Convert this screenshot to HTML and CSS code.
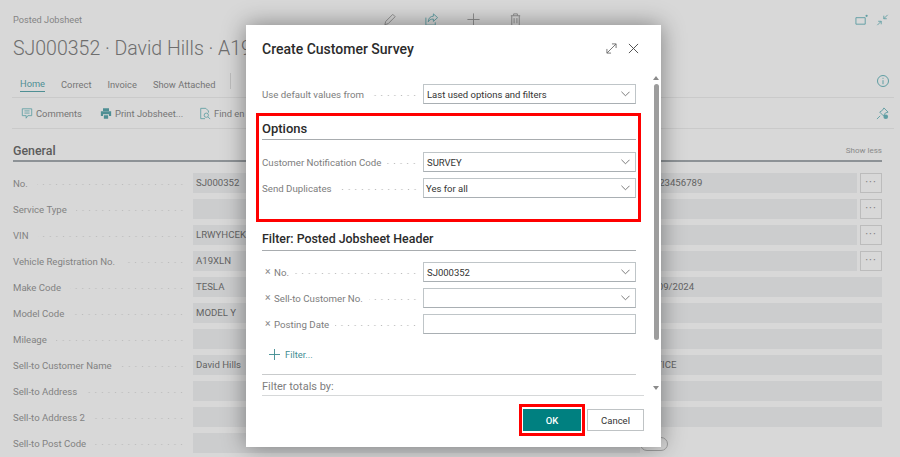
FILE: index.html
```html
<!DOCTYPE html>
<html lang="en">
<head>
	<meta charset="UTF-8">
	<title>Create Customer Survey</title>
	<link rel="stylesheet" href="styles.css">
</head>
<body>
	<div class="page">
		<div class="top">
			<span class="caption">Posted Jobsheet</span>
			<div class="top-tools">
				<svg class="tool" viewBox="0 0 16 16"><path d="M3 13.500l1-3.500 7.500-7.500 2.500 2.500L6.500 12.500z"/></svg>
				<svg class="tool tool-teal" viewBox="0 0 16 16"><path d="M10 2l4.500 4-4.500 4V7.500C7 7.500 5.500 8.500 4.500 10.500 4.500 6.500 7 4.500 10 4.500zM2 6v8h10v-3"/></svg>
				<svg class="tool" viewBox="0 0 16 16"><path d="M8 1.500v13M1.500 8h13"/></svg>
				<svg class="tool" viewBox="0 0 16 16"><path d="M3 4h10M6 4V2h4v2M4 4v10.500h8V4M6.500 6.500v5.500M9.500 6.500v5.500"/></svg>
			</div>
			<div class="top-right">
				<svg class="tool-small" viewBox="0 0 14 12"><path d="M1 3.500h10v7H1z"/><circle class="dot" cx="12.500" cy="1.500" r="1.200"/></svg>
				<svg class="tool-small" viewBox="0 0 14 14"><path d="M13 1L8.500 5.500M8.500 2v3.500H12M1 13l4.500-4.500M5.500 12V8.500H2"/></svg>
			</div>
		</div>
		<h1 class="title">SJ000352 · David Hills · A19</h1>

		<div class="tabs">
			<span class="tab tab-on">Home</span>
			<span class="tab">Correct</span>
			<span class="tab">Invoice</span>
			<span class="tab">Show Attached</span>
			<span class="tab-sep"></span>
			<svg class="tab-info" viewBox="0 0 14 14"><circle cx="7" cy="7" r="5.500"/><path d="M7 6.200v4M7 3.800v1"/></svg>
		</div>

		<div class="actions">
			<span class="action action-a">
				<svg class="action-icon" viewBox="0 0 14 14"><path d="M1.500 1.500h11v8H8L6 12.500V9.500H1.500zM4 4h6M4 6.500h6"/></svg>
				Comments
			</span>
			<span class="action action-b">
				<svg class="action-icon" viewBox="0 0 14 14"><path class="solid" d="M3.500 1h7v3h-7zM1 4.500h12V10h-2.500V8h-7v2H1zM4.500 9h5v4h-5z"/></svg>
				Print Jobsheet...
			</span>
			<span class="action">
				<svg class="action-icon" viewBox="0 0 14 14"><path d="M2 1h6l3 3v2M2 1v12h5"/><circle cx="8.500" cy="9" r="2.500"/><path d="M10.500 11l2.500 2.500"/></svg>
				Find en
			</span>
			<svg class="action-pin" viewBox="0 0 14 14"><path d="M8.500 1l4.500 4.500-3 1-2 3-4-4 3-2zM4.500 9.500L1 13"/><circle class="dot" cx="10.500" cy="10.500" r="2.500"/></svg>
		</div>

		<div class="section-head">
			<span class="section-title">General</span>
			<span class="show-less">Show less</span>
		</div>

		<div class="general">
			<div class="col col-left">
				<div class="g-row"><span class="g-label">No.</span><span class="leader"></span><span class="g-value">SJ000352</span></div>
				<div class="g-row"><span class="g-label">Service Type</span><span class="leader"></span><span class="g-value"></span></div>
				<div class="g-row"><span class="g-label">VIN</span><span class="leader"></span><span class="g-value">LRWYHCEK6</span></div>
				<div class="g-row"><span class="g-label">Vehicle Registration No.</span><span class="leader"></span><span class="g-value">A19XLN</span></div>
				<div class="g-row"><span class="g-label">Make Code</span><span class="leader"></span><span class="g-value">TESLA</span></div>
				<div class="g-row"><span class="g-label">Model Code</span><span class="leader"></span><span class="g-value">MODEL Y</span></div>
				<div class="g-row"><span class="g-label">Mileage</span><span class="leader"></span><span class="g-value"></span></div>
				<div class="g-row"><span class="g-label">Sell-to Customer Name</span><span class="leader"></span><span class="g-value">David Hills</span></div>
				<div class="g-row"><span class="g-label">Sell-to Address</span><span class="leader"></span><span class="g-value"></span></div>
				<div class="g-row"><span class="g-label">Sell-to Address 2</span><span class="leader"></span><span class="g-value"></span></div>
				<div class="g-row"><span class="g-label">Sell-to Post Code</span><span class="leader"></span><span class="g-value"></span></div>
			</div>
			<div class="col col-right">
				<div class="g-row"><span class="g-value">00123456789</span><span class="more">···</span></div>
				<div class="g-row"><span class="g-value"></span><span class="more">···</span></div>
				<div class="g-row"><span class="g-value"></span><span class="more">···</span></div>
				<div class="g-row"><span class="g-value"></span><span class="more">···</span></div>
				<div class="g-row"><span class="g-value">12/09/2024</span></div>
				<div class="g-row"><span class="g-value"></span></div>
				<div class="g-row"><span class="g-value"></span></div>
				<div class="g-row"><span class="g-value">NOTICE</span></div>
				<div class="g-row"><span class="g-value"></span></div>
				<div class="g-row"><span class="g-value"></span></div>
				<div class="g-row"><span class="toggle"></span></div>
			</div>
		</div>
	</div>

	<div class="dialog">
		<div class="dialog-head">
			<span class="dialog-title">Create Customer Survey</span>
			<svg class="head-icon head-expand" viewBox="0 0 12 12"><path d="M1 11L11 1M6.500 1H11v4.500M1 6.500V11h4.500"/></svg>
			<svg class="head-icon head-close" viewBox="0 0 12 12"><path d="M1 1l10 10M11 1L1 11"/></svg>
		</div>

		<div class="dialog-body">
			<div class="form">
				<div class="row row-first">
					<span class="label">Use default values from</span><span class="leader"></span>
					<div class="input">Last used options and filters<svg class="chev" viewBox="0 0 10 6"><path d="M.5.500L5 5 9.500.500"/></svg></div>
				</div>

				<div class="options">
					<h2 class="group">Options</h2>
					<div class="row">
						<span class="label">Customer Notification Code</span><span class="leader"></span>
						<div class="input">SURVEY<svg class="chev" viewBox="0 0 10 6"><path d="M.5.500L5 5 9.500.500"/></svg></div>
					</div>
					<div class="row">
						<span class="label">Send Duplicates</span><span class="leader"></span>
						<div class="input input-tight">Yes for all<svg class="chev" viewBox="0 0 10 6"><path d="M.5.500L5 5 9.500.500"/></svg></div>
					</div>
				</div>

				<h2 class="group group-filter">Filter: Posted Jobsheet Header</h2>
				<div class="row">
					<span class="x">×</span><span class="label">No.</span><span class="leader"></span>
					<div class="input">SJ000352<svg class="chev" viewBox="0 0 10 6"><path d="M.5.500L5 5 9.500.500"/></svg></div>
				</div>
				<div class="row">
					<span class="x">×</span><span class="label">Sell-to Customer No.</span><span class="leader"></span>
					<div class="input"><svg class="chev" viewBox="0 0 10 6"><path d="M.5.500L5 5 9.500.500"/></svg></div>
				</div>
				<div class="row">
					<span class="x">×</span><span class="label">Posting Date</span><span class="leader"></span>
					<div class="input"></div>
				</div>

				<div class="add-filter">
					<svg class="plus" viewBox="0 0 12 12"><path d="M6 0v12M0 6h12"/></svg>
					Filter...
				</div>
				<div class="totals">Filter totals by:</div>
			</div>

			<div class="scroll">
				<span class="arrow arrow-up"></span>
				<span class="thumb"></span>
				<span class="arrow arrow-down"></span>
			</div>
		</div>

		<div class="dialog-foot">
			<div class="ok-mark"><button class="btn btn-ok">OK</button></div>
			<button class="btn btn-cancel">Cancel</button>
		</div>
	</div>
</body>
</html>
```

FILE: styles.css
```css
html, body { margin: 0; padding: 0; height: 100%; overflow: hidden; }
body { position: relative; background: #d8d8d8; color: #6b6b6b; font-family: Roboto, "Open Sans", sans-serif; font-size: 9.6px; }
h1, h2 { margin: 0; font-weight: normal; }

/* page behind the dialog */
.page { padding: 0 18px 0 13px; }
.top { display: flex; align-items: center; height: 34px; padding-top: 5px; box-sizing: border-box; }
.caption { font-size: 9.2px; color: #858585; width: 369px; }
.top-tools { display: flex; gap: 27px; }
.tool { width: 15px; height: 15px; fill: none; stroke: #8b8b8b; stroke-width: 1; }
.tool-teal { stroke: #5f9ea3; }
.top-right { margin-left: auto; margin-right: -7px; display: flex; gap: 8px; align-items: center; }
.tool-small { width: 13px; height: 12px; fill: none; stroke: #5f9ea3; stroke-width: 1; }
.dot { fill: #5f9ea3; stroke: none; }
.title { font-size: 19.500px; font-weight: 300; line-height: 30px; color: #6e6e6e; white-space: nowrap; height: 31px; }

.tabs { display: flex; align-items: center; height: 32px; margin-right: -12px; border-bottom: 1px solid #cacaca; margin-left: -1px; padding-left: 8px; }
.tab { font-size: 9.3px; color: #757575; margin-right: 16px; line-height: 14px; padding-top: 7px; }
.tab-on { color: #4f8f94; border-bottom: 1px solid #4f8f94; }
.tab-sep { width: 1px; height: 16px; background: #bdbdbd; margin-left: -1px; }
.tab-info { width: 14px; height: 14px; margin-left: auto; margin-right: 4px; fill: none; stroke: #5f9ea3; stroke-width: 1; }

.actions { display: flex; align-items: center; height: 30px; margin-left: -1px; margin-right: -12px; padding-left: 9px; border-bottom: 1px solid #cacaca; }
.action { display: flex; align-items: center; gap: 3px; font-size: 9.4px; color: #757575; }
.action-a { width: 79px; }
.action-b { width: 99px; }
.action-icon { width: 12px; height: 13px; fill: none; stroke: #5f9ea3; stroke-width: 1; }
.solid { fill: #4f8f94; stroke: none; }
.action-pin { width: 13px; height: 13px; margin-left: auto; margin-right: 5px; fill: none; stroke: #5f9ea3; stroke-width: 1; }

.section-head { display: flex; justify-content: space-between; align-items: center; height: 31px; border-bottom: 2px solid #8d9296; }
.section-title { font-size: 12.4px; font-weight: 500; color: #5c5c5c; padding-top: 11px; }
.show-less { font-size: 8px; color: #8a8a8a; padding-top: 12px; }

.general { display: flex; padding-top: 11px; }
.col { display: flex; flex-direction: column; gap: 6px; }
.col-left { width: 627px; }
.col-right { flex: 1; }
.g-row { display: flex; align-items: center; height: 20px; gap: 3px; }
.g-label { font-size: 9.6px; color: #828282; white-space: nowrap; }
.g-value { flex: 1; height: 100%; background: #cccdce; font-size: 9.6px; line-height: 20px; padding-left: 3px; color: #636363; white-space: nowrap; overflow: hidden; }
.col-left .g-value { flex: 0 0 444px; }
.leader { flex: 1; height: 3px; margin: 2px 5px 0 6px; background-image: radial-gradient(circle, #bdbdbd .6px, transparent 1px); background-size: 6.6px 3px; background-position: right center; }
.more { flex: 0 0 20px; height: 18px; border: 1px solid #bcbcbc; text-align: center; line-height: 17px; font-size: 11px; letter-spacing: 1px; color: #777; }
.toggle { width: 26px; height: 12px; border: 1px solid #9e9e9e; border-radius: 7px; margin-top: 2px; }

/* dialog */
.dialog { position: absolute; left: 246px; top: 25px; width: 415px; height: 422px; background: #fff; box-shadow: 0 0 22px rgba(0, 0, 0, .42); display: flex; flex-direction: column; }
.dialog-head { display: flex; align-items: center; height: 47px; padding: 0 22px 0 16px; flex: none; }
.dialog-title { flex: 1; font-size: 14px; font-weight: 500; color: #2b2b2b; }
.head-icon { fill: none; stroke: #6f6f6f; stroke-width: 1; }
.head-expand { width: 11px; height: 11px; margin-right: 11px; }
.head-close { width: 11px; height: 11px; stroke: #444; }

.dialog-body { flex: 1; display: flex; min-height: 0; overflow: hidden; }
.form { width: 374px; padding-left: 16px; padding-top: 12px; flex: none; }
.scroll { margin-left: 15px; width: 10px; display: flex; flex-direction: column; align-items: center; padding-top: 4px; }
.thumb { width: 5px; height: 256px; background: #9d9d9d; border-radius: 3px; margin-top: 4px; }
.arrow { width: 0; height: 0; border-left: 3px solid transparent; border-right: 3px solid transparent; }
.arrow-up { border-bottom: 4px solid #8a8a8a; }
.arrow-down { border-top: 4px solid #8a8a8a; margin-top: 46px; }

.row { display: flex; align-items: center; height: 20px; margin-bottom: 6px; }
.row-first { margin-bottom: 0; }
.label { font-size: 9.7px; color: #7d7d7d; white-space: nowrap; }
.x { font-size: 10.5px; color: #8a8a8a; width: 12px; padding-left: 3px; box-sizing: border-box; line-height: 12px; }
.row .leader { margin-right: 5px; }
.input { flex: 0 0 213px; box-sizing: border-box; height: 20px; border: 1px solid #bfc5c8; border-bottom-color: #a9afb3; padding-left: 3px; font-size: 9.5px; line-height: 19px; color: #333; position: relative; }
.input-tight { padding-left: 2px; }
.chev { position: absolute; right: 5px; top: 6px; width: 9px; height: 6px; fill: none; stroke: #6d6d6d; stroke-width: 1; }

.options { border: 3px solid #ff0000; margin: 9px -5px 0 -6px; padding: 0 2px 18px 3px; height: 109px; box-sizing: border-box; }
.group { font-size: 13px; font-weight: 500; color: #2b2b2b; line-height: 18px; padding-top: 4px; padding-bottom: 1px; border-bottom: 1px solid #a8acaf; margin-bottom: 12px; }
.group-filter { font-size: 12.4px; margin-top: 8px; margin-bottom: 11px; padding-top: 0; padding-bottom: 2px; }

.add-filter { display: flex; align-items: center; gap: 5px; font-size: 9.3px; color: #3f8d92; padding: 0 0 6px 7px; height: 35px; box-sizing: border-box; border-bottom: 1px solid #c9cbcc; }
.plus { width: 11px; height: 11px; fill: none; stroke: #3f8d92; stroke-width: 1; }
.totals { font-size: 11px; color: #7d7d7d; line-height: 16px; padding-top: 4px; width: 382px; border-bottom: 1px solid #d6d8d9; }

.dialog-foot { flex: none; display: flex; justify-content: flex-end; align-items: center; gap: 2px; height: 51px; padding: 0 17px 3px 0; box-sizing: border-box; }
.ok-mark { border: 3px solid #ff0000; padding: 2px 1px; display: flex; }
.btn { font-family: inherit; font-size: 9.5px; height: 22px; padding: 0; box-sizing: border-box; }
.btn-ok { width: 58px; background: #008080; border: none; color: #fff; font-weight: 500; }
.btn-cancel { width: 57px; background: #fff; border: 1px solid #bfc3c5; color: #333; }
```
